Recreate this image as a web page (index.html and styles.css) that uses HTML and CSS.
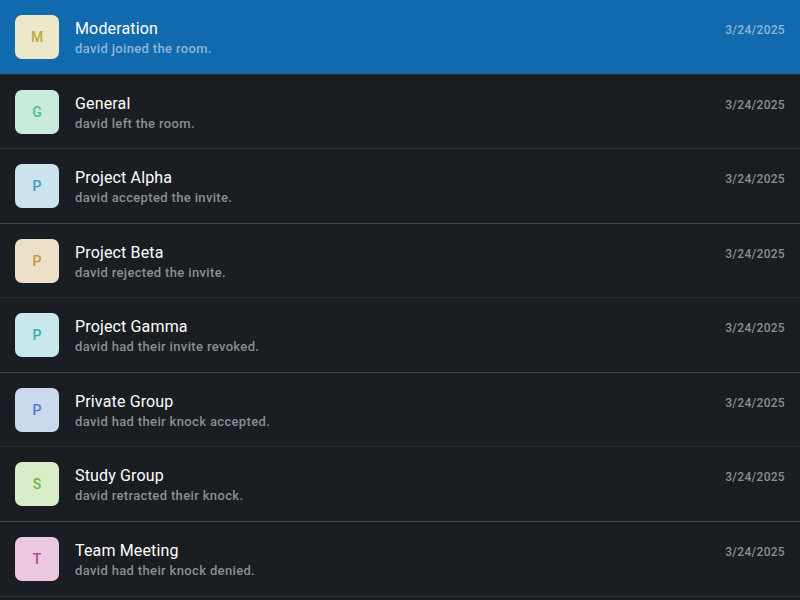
FILE: index.html
```html
<!DOCTYPE html>
<html>
<head>
<meta charset="utf-8">
<link rel="stylesheet" href="styles.css">
</head>
<body>
<div class="list">
  <div class="row active">
    <div class="avatar av-m">M</div>
    <div class="text"><div class="title">Moderation</div><div class="sub">david joined the room.</div></div>
    <div class="date">3/24/2025</div>
  </div>
  <div class="row">
    <div class="avatar av-g">G</div>
    <div class="text"><div class="title">General</div><div class="sub">david left the room.</div></div>
    <div class="date">3/24/2025</div>
  </div>
  <div class="row">
    <div class="avatar av-pa">P</div>
    <div class="text"><div class="title">Project Alpha</div><div class="sub">david accepted the invite.</div></div>
    <div class="date">3/24/2025</div>
  </div>
  <div class="row">
    <div class="avatar av-pb">P</div>
    <div class="text"><div class="title">Project Beta</div><div class="sub">david rejected the invite.</div></div>
    <div class="date">3/24/2025</div>
  </div>
  <div class="row">
    <div class="avatar av-pg">P</div>
    <div class="text"><div class="title">Project Gamma</div><div class="sub">david had their invite revoked.</div></div>
    <div class="date">3/24/2025</div>
  </div>
  <div class="row">
    <div class="avatar av-pr">P</div>
    <div class="text"><div class="title">Private Group</div><div class="sub">david had their knock accepted.</div></div>
    <div class="date">3/24/2025</div>
  </div>
  <div class="row">
    <div class="avatar av-s">S</div>
    <div class="text"><div class="title">Study Group</div><div class="sub">david retracted their knock.</div></div>
    <div class="date">3/24/2025</div>
  </div>
  <div class="row">
    <div class="avatar av-t">T</div>
    <div class="text"><div class="title">Team Meeting</div><div class="sub">david had their knock denied.</div></div>
    <div class="date">3/24/2025</div>
  </div>
</div>
</body>
</html>
```
FILE: styles.css
```css
html, body {
  margin: 0;
  padding: 0;
  background: #1a1d21;
  font-family: Roboto, "Liberation Sans", sans-serif;
  overflow: hidden;
}
.list {
  display: flex;
  flex-direction: column;
}
.row {
  box-sizing: border-box;
  height: 74.57px;
  flex: none;
  display: flex;
  align-items: flex-start;
  padding: 15px 15px 0 15px;
  border-bottom: 1px solid #2c2f33;
}
.row:nth-child(2n+3) {
  border-bottom-color: #45484c;
}
.row.active {
  background: #116aad;
}
.avatar {
  width: 44px;
  height: 44px;
  border-radius: 7px;
  flex: none;
  display: flex;
  align-items: center;
  justify-content: center;
  font-size: 14px;
  font-weight: 500;
}
.av-m { background: #ece7c9; color: #b8ab3c; }
.av-g { background: #c9ebdb; color: #4cbf8c; }
.av-pa { background: #cbe2ef; color: #4797cd; }
.av-pb { background: #ecdfc8; color: #c6973f; }
.av-pg { background: #c8e8ec; color: #3eaab8; }
.av-pr { background: #cad9ee; color: #4b7acb; }
.av-s { background: #d8ecc8; color: #6ab53f; }
.av-t { background: #ecc8df; color: #c2429d; }
.text {
  flex: 1;
  margin-left: 16px;
  padding-top: 4px;
  min-width: 0;
}
.title {
  color: #ffffff;
  font-size: 16px;
  line-height: 20px;
  font-weight: 400;
  letter-spacing: 0.15px;
}
.sub {
  color: #8b8e92;
  font-size: 13px;
  line-height: 18px;
  font-weight: 500;
  letter-spacing: 0.35px;
  margin-top: 1px;
}
.active .sub { color: #8fb5d9; }
.date {
  flex: none;
  color: #8b8e92;
  font-size: 12px;
  font-weight: 500;
  line-height: 16px;
  margin-top: 7px;
  letter-spacing: 0.3px;
}
.active .date { color: #8fb5d9; }
```
